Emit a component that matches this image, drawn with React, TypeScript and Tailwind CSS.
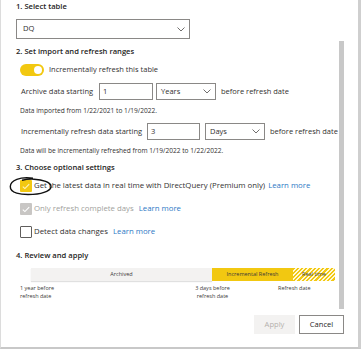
import type { ReactNode } from "react";

const font = "font-['Segoe_UI','Open_Sans','Liberation_Sans',sans-serif]";

function Chevron() {
  return (
    <svg width="8" height="5" viewBox="0 0 8 5" className="shrink-0">
      <polyline points="0.5,0.5 4,4 7.5,0.5" fill="none" stroke="#605e5c" strokeWidth="0.9" />
    </svg>
  );
}

function Check({ color }: { color: string }) {
  return (
    <svg width="8" height="7" viewBox="0 0 8 7">
      <polyline points="0.8,3.6 2.9,5.6 7.2,1.2" fill="none" stroke={color} strokeWidth="1.1" />
    </svg>
  );
}

function Heading({ children, className = "" }: { children: ReactNode; className?: string }) {
  return (
    <div className={`flex h-[14px] items-center pl-[15px] text-[7.6px] font-semibold text-[#252423] ${className}`}>
      {children}
    </div>
  );
}

function LearnMore() {
  return <span className="ml-[3px] text-[#2b78c5]">Learn more</span>;
}

export default function App() {
  return (
    <div className={`h-[349px] w-[362px] overflow-hidden bg-white ${font}`}>
      <div className="flex h-[349px] w-[361px] flex-col border-b-2 border-l border-r-[3px] border-b-[#c8c8c8] border-l-[#dcdcdc] border-r-[#cfcfcf]">
        <div className="flex h-[309px]">
          <div className="relative flex-1 whitespace-nowrap text-[7.5px] text-[#323130]">
            <Heading>1. Select table</Heading>

            <div className="ml-[15px] mt-[5px] flex h-[20px] w-[174px] items-center justify-between border border-[#8a8886] pl-[6px] pr-[4px] text-[7.6px]">
              <span>DQ</span>
              <Chevron />
            </div>

            <Heading className="mt-[6px]">2. Set import and refresh ranges</Heading>

            <div className="ml-[19px] mt-[4px] flex h-[14px] items-center gap-[5px]">
              <div className="flex h-[12px] w-[24px] items-center justify-end rounded-full bg-[#f2c811] pr-[2px]">
                <div className="h-[8px] w-[8px] rounded-full bg-white" />
              </div>
              <span>Incrementally refresh this table</span>
            </div>

            <div className="ml-[20px] mt-[6px] flex h-[17px] items-center">
              <span className="w-[78px]">Archive data starting</span>
              <div className="flex h-[17px] w-[54px] items-center border border-[#8a8886] pl-[3px]">1</div>
              <div className="ml-[3px] flex h-[17px] w-[60px] items-center justify-between border border-[#8a8886] pl-[4px] pr-[4px]">
                <span>Years</span>
                <Chevron />
              </div>
              <span className="ml-[5px]">before refresh date</span>
            </div>

            <div className="ml-[19px] mt-[5px] flex h-[12px] items-center text-[6.6px]">
              Data imported from 1/22/2021 to 1/19/2022.
            </div>

            <div className="ml-[20px] mt-[6px] flex h-[17px] items-center">
              <span className="w-[126px]">Incrementally refresh data starting</span>
              <div className="flex h-[17px] w-[53px] items-center border border-[#8a8886] pl-[3px]">3</div>
              <div className="ml-[5px] flex h-[17px] w-[60px] items-center justify-between border border-[#8a8886] pl-[4px] pr-[4px]">
                <span>Days</span>
                <Chevron />
              </div>
              <span className="ml-[5px]">before refresh date</span>
            </div>

            <div className="ml-[19px] mt-[5px] flex h-[12px] items-center text-[6.6px]">
              Data will be incrementally refreshed from 1/19/2022 to 1/22/2022.
            </div>

            <Heading className="mt-[4px]">3. Choose optional settings</Heading>

            <div className="relative ml-[19px] mt-[4px] flex h-[14px] items-center gap-[2px] text-[7.8px]">
              <div className="flex h-[12px] w-[12px] items-center justify-center rounded-[1px] bg-[#f2c811]">
                <Check color="#fdf3c4" />
              </div>
              <span>
                Get the latest data in real time with DirectQuery (Premium only)
                <LearnMore />
              </span>
              <svg width="44" height="20" viewBox="0 0 44 20" className="absolute left-[-11px] top-[-3px]">
                <path
                  d="M24 2.2 C11 0.6 1.5 4 1.3 10.5 C1.1 17 11 19.2 24 18.4 C36 17.6 42.6 14 42 10 C41.4 6.2 34 3.6 25 3.2 C20.5 3 16.5 3.4 13 4.3"
                  fill="none"
                  stroke="#111"
                  strokeWidth="1.4"
                />
              </svg>
            </div>

            <div className="ml-[19px] mt-[9px] flex h-[14px] items-center gap-[2px] text-[7.8px]">
              <div className="flex h-[12px] w-[12px] items-center justify-center rounded-[1px] bg-[#c8c6c4]">
                <Check color="#ffffff" />
              </div>
              <span className="text-[#a19f9d]">Only refresh complete days</span>
              <LearnMore />
            </div>

            <div className="ml-[19px] mt-[9px] flex h-[14px] items-center gap-[2px] text-[7.8px]">
              <div className="h-[12px] w-[12px] rounded-[1px] border border-[#605e5c]" />
              <span>Detect data changes</span>
              <LearnMore />
            </div>

            <Heading className="mt-[10px]">4. Review and apply</Heading>

            <div className="ml-[30px] mt-[5px] flex h-[13px] w-[304px] text-[5.5px] text-[#3b3a39]">
              <div className="flex w-[181px] items-center justify-center bg-[#f3f2f1] shadow-[0_1px_1px_rgba(0,0,0,0.12)]">
                Archived
              </div>
              <div className="flex w-[81px] items-center justify-center bg-[#f2c811]">Incremental Refresh</div>
              <div className="flex w-[42px] items-center justify-center bg-[repeating-linear-gradient(135deg,#f2c811_0px,#f2c811_1.5px,#fff8d6_1.5px,#fff8d6_3px)]">
                Real time
              </div>
            </div>

            <div className="relative mt-[4px] h-[16px] text-[5.5px] leading-[7.5px] text-[#3b3a39]">
              <div className="absolute left-[19px] top-0">
                1 year before
                <br />
                refresh date
              </div>
              <div className="absolute left-[193px] top-0 w-[37px] text-center">
                3 days before
                <br />
                refresh date
              </div>
              <div className="absolute left-[277px] top-0">Refresh date</div>
            </div>
          </div>
          <div className="mr-[14px] mt-[41px] h-[268px] w-[5px] shrink-0 bg-[#c8c8c8]" />
        </div>

        <div className="mt-[6px] flex justify-end gap-[4px] pr-[14px] text-[7.6px]">
          <div className="flex h-[19px] w-[41px] items-center justify-center bg-[#f3f2f1] text-[#b3b0ad]">Apply</div>
          <div className="flex h-[19px] w-[45px] items-center justify-center border border-[#8a8886] bg-white text-[#252423]">
            Cancel
          </div>
        </div>
      </div>
    </div>
  );
}
